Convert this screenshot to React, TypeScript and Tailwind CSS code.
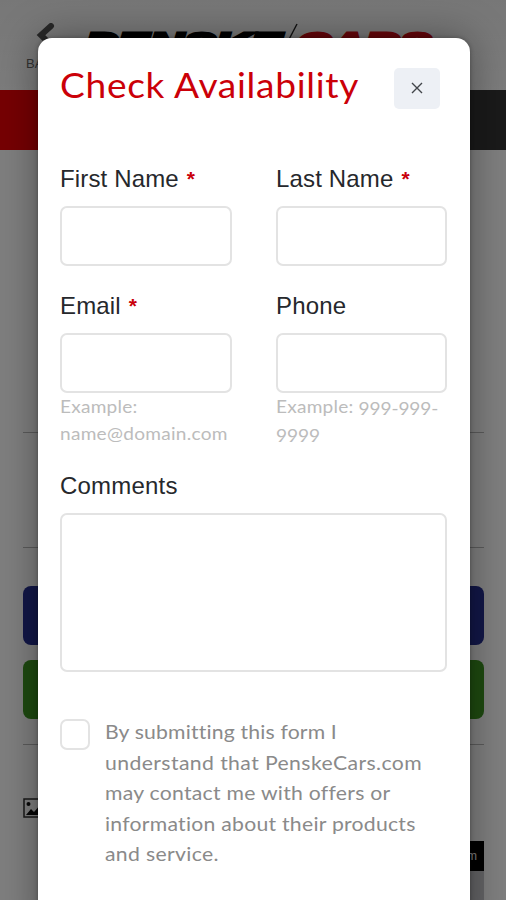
import React from "react";

function Field({ label, required, children }: { label: string; required?: boolean; children?: React.ReactNode }) {
  return (
    <div className="flex min-w-0 flex-col">
      <label className="flex h-[44px] pt-px font-['Liberation_Sans',sans-serif] text-[24px] leading-[32px] tracking-[0.15px] whitespace-nowrap text-[#26282c]">
        {label}
        {required && <span className="ml-[8px] text-[21px] leading-[31px] font-bold text-[#c9000b]">*</span>}
      </label>
      <div className="h-[60px] rounded-[7px] border-2 border-[#e3e3e3] bg-white" />
      {children}
    </div>
  );
}

function Page() {
  return (
    <div className="h-[900px] bg-white">
      <header className="flex h-[90px] justify-between bg-gradient-to-b from-[#efefef] to-[#fafafa] pl-[23px]">
        <div className="w-[60px] shrink-0 pt-[23px]">
          <svg width="36" height="28" viewBox="0 0 36 28" fill="none" stroke="#505050" strokeWidth="6">
            <path d="M28 3 18 12 28 22" strokeLinecap="round" />
          </svg>
          <div className="mt-[4px] pl-[3px] font-['Liberation_Sans',sans-serif] text-[13px] leading-[17px] text-[#666]">BACK</div>
        </div>
        <svg className="mt-[23px] shrink-0" width="423" height="50" viewBox="0 0 423 50" fontFamily="'Liberation Sans', sans-serif" fontWeight="900" fontStyle="italic">
          <text x="2" y="32" fontSize="31" textLength="197" lengthAdjust="spacingAndGlyphs" stroke="#000" strokeWidth="3">PENSKE</text>
          <path d="m214 1-25 48" stroke="#222" strokeWidth="1.4" />
          <text x="213" y="32" fontSize="31" fill="#d00c16" stroke="#d00c16" strokeWidth="3" textLength="135" lengthAdjust="spacingAndGlyphs">CARS</text>
        </svg>
      </header>
      <div className="flex h-[60px]">
        <div className="w-1/2 bg-[#ed0007]" />
        <div className="w-1/2 bg-[#343434]" />
      </div>
      <main className="flex flex-col pr-[22px] pl-[23px]">
        <div className="h-[283px] border-b border-[#b8b8b8]" />
        <div className="h-[115px] border-b border-[#b8b8b8]" />
        <div className="mt-[38px] h-[59px] rounded-[8px] bg-[#242e91]" />
        <div className="mt-[15px] h-[59px] rounded-[8px] bg-[#3c9420]" />
        <div className="h-[26px] border-b border-[#b8b8b8]" />
        <div className="mt-[53px] flex h-[43px]">
          <svg width="22" height="20" viewBox="0 0 22 20" fill="none">
            <path d="M1 1h20v18H1z" stroke="#333" strokeWidth="1.5" />
            <circle cx="5.5" cy="6" r="2" fill="#111" />
            <path d="m3 17 5-6 3 3 7-8v11z" fill="#111" />
          </svg>
        </div>
        <div className="flex justify-end">
          <div className="w-[90px]">
            <div className="h-[30px] bg-black pr-[7px] text-right font-['Liberation_Sans',sans-serif] text-[12px] leading-[30px] text-white">.com</div>
            <div className="h-[29px] bg-[#c8c8cc]" />
          </div>
        </div>
      </main>
    </div>
  );
}

export default function App() {
  return (
    <div className="relative h-[900px] w-[506px] overflow-hidden">
      <Page />
      <div className="absolute inset-0 bg-black/50 pt-[38px] pr-[36px] pl-[38px]">
        <section className="h-[900px] rounded-t-[14px] bg-white pr-[23px] pl-[22px] shadow-[0_0_42px_rgba(0,0,0,0.38),0_0_4px_rgba(0,0,0,0.3)]">
          <div className="flex h-[124px] justify-between pr-[7px]">
            <h1 className="mt-[25px] h-[44px] origin-left scale-x-[1.06] font-['Lato',sans-serif] text-[35px] leading-[43px] tracking-[0.66px] whitespace-nowrap text-[#cb0008]">Check Availability</h1>
            <button className="mt-[30px] flex h-[41px] w-[46px] shrink-0 items-center justify-center rounded-[5px] bg-[#edf0f5]">
              <svg width="12" height="12" viewBox="0 0 12 12" className="mb-[2px]" stroke="#42454a" strokeWidth="1.4"><path d="m1 1 10 10M11 1 1 11" /></svg>
            </button>
          </div>
          <form>
            <div className="grid grid-cols-[172px_171px] gap-x-[44px]">
              <Field label="First Name" required />
              <Field label="Last Name" required />
            </div>
            <div className="mt-[23px] grid grid-cols-[172px_171px] gap-x-[44px]">
              <Field label="Email" required>
                <p className="origin-left scale-x-[1.06] font-['Lato',sans-serif] text-[18px] leading-[27px] whitespace-nowrap text-[#bcbcbc]">
                  <span className="block tracking-[0.2px]">Example:</span>
                  <span className="block tracking-[0.25px]">name@domain.com</span>
                </p>
              </Field>
              <Field label="Phone">
                <p className="origin-left scale-x-[1.06] font-['Lato',sans-serif] text-[18px] leading-[27px] whitespace-nowrap text-[#bcbcbc]">
                  <span className="block tracking-[0.2px]">Example: <span className="relative top-[2px] tracking-[-0.1px]">999-999-</span></span>
                  <span className="relative top-[2px] block tracking-[-0.1px]">9999</span>
                </p>
              </Field>
            </div>
            <div className="mt-[22px] flex flex-col">
              <label className="h-[44px] pt-px font-['Liberation_Sans',sans-serif] text-[24px] leading-[32px] tracking-[0.2px] text-[#26282c]">Comments</label>
              <div className="h-[159px] rounded-[7px] border-2 border-[#e3e3e3] bg-white" />
            </div>
            <div className="mt-[44px] flex gap-[15px]">
              <div className="mt-[3px] h-[31px] w-[30px] shrink-0 rounded-[7px] border-2 border-[#e3e3e3]" />
              <p className="origin-left scale-x-[1.06] font-['Lato',sans-serif] text-[20px] leading-[30.6px] whitespace-nowrap text-[#8a8a8a]">
                <span className="block tracking-[0.15px]">By submitting this form I</span>
                <span className="block tracking-[0.37px]">understand that PenskeCars.com</span>
                <span className="block tracking-[0.24px]">may contact me with offers or</span>
                <span className="block tracking-[0.23px]">information about their products</span>
                <span className="block tracking-[0.3px]">and service.</span>
              </p>
            </div>
          </form>
        </section>
      </div>
    </div>
  );
}
